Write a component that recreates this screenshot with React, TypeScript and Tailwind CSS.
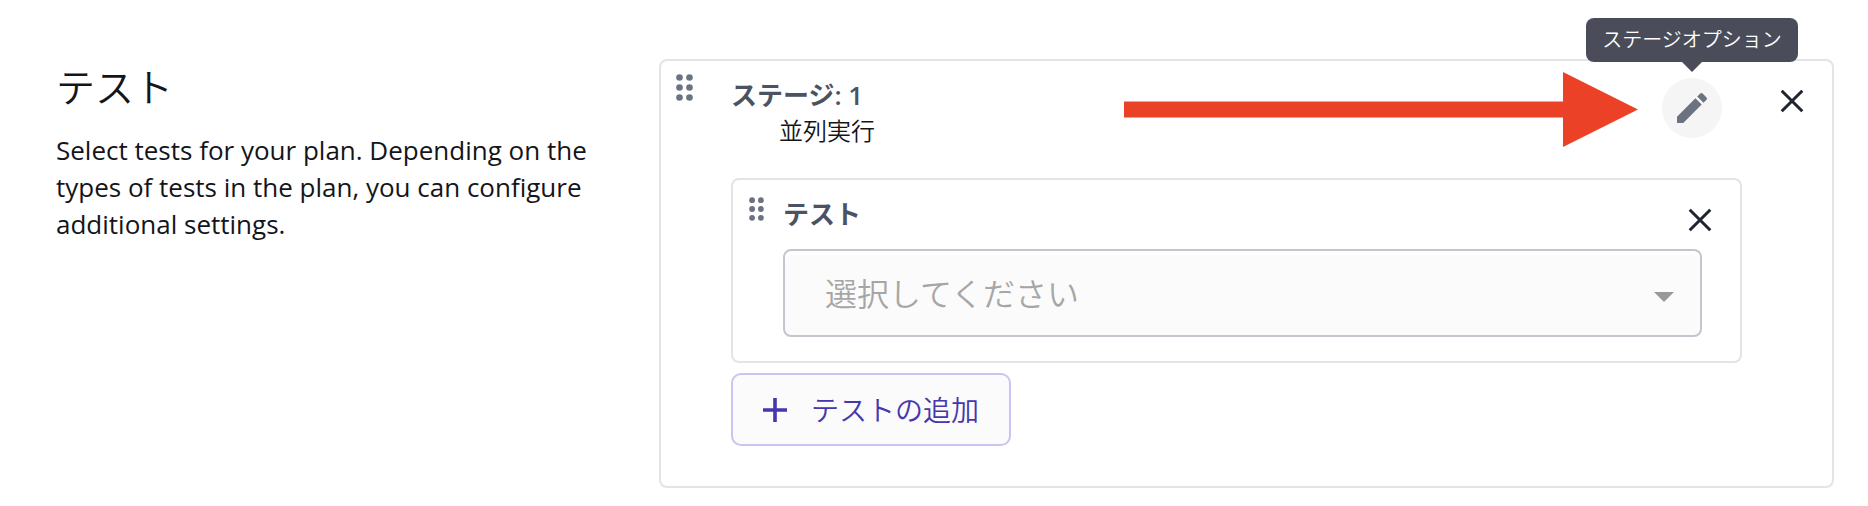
import React, { useState } from 'react';

interface IconProps {
    className?: string;
}

const DragIcon: React.FC<IconProps> = ({ className }) => (
    <svg viewBox="0 0 17 27" className={className} fill="#6b7280" aria-hidden="true">
        {[3.5, 13.5, 23.5].map(y => (
            <g key={y}>
                <circle cx="3.5" cy={y} r="3.3" />
                <circle cx="13.5" cy={y} r="3.3" />
            </g>
        ))}
    </svg>
);

const CloseIcon: React.FC<IconProps> = ({ className }) => (
    <svg viewBox="0 0 24 24" className={className} stroke="#1f242e" strokeWidth="3" fill="none" aria-hidden="true">
        <path d="M1.7 1.7L22.3 22.3M22.3 1.7L1.7 22.3" />
    </svg>
);

const PencilIcon: React.FC<IconProps> = ({ className }) => (
    <svg viewBox="0 0 24 24" className={className} fill="#6b7280" aria-hidden="true">
        <path d="M3 17.25V21h3.75L17.81 9.94l-3.75-3.75L3 17.25zM20.71 7.04a1 1 0 0 0 0-1.41l-2.34-2.34a1 1 0 0 0-1.41 0l-1.83 1.83 3.75 3.75 1.83-1.83z" />
    </svg>
);

const PlusIcon: React.FC<IconProps> = ({ className }) => (
    <svg viewBox="0 0 24 24" className={className} stroke="#4637ad" strokeWidth="3.6" aria-hidden="true">
        <path d="M0 12H24M12 0V24" />
    </svg>
);

const TestCard: React.FC = () => {
    const [teste, setTeste] = useState('');

    return (
        <div className="rounded-lg border-2 border-[#e3e3e8] pb-6">
            <div className="flex h-[69px] items-start">
                <div className="w-[50px] shrink-0 pt-[17px] pl-4">
                    <DragIcon className="h-6 w-[15px]" />
                </div>
                <label htmlFor="test-select" className="flex-1 pt-[15px] text-[26px] leading-[38px] font-bold text-[#4b5263]">テスト</label>
                <button type="button" aria-label="テストを削除" className="mt-[17px] mr-4 flex h-[46px] w-12 items-center justify-center">
                    <CloseIcon className="h-6 w-6" />
                </button>
            </div>
            <div className="relative mr-[38px] ml-[50px]">
                <select
                    id="test-select"
                    value={teste}
                    onChange={(e) => setTeste(e.target.value)}
                    className="block h-[88px] w-full appearance-none rounded-lg border-2 border-[#c5c5cd] bg-[#fbfbfb] pt-[2px] pr-20 pl-10 text-[32px] font-[350] text-[#a6a6a6] shadow-[inset_0_4px_0_#ffffff] outline-none"
                >
                    <option value="">選択してください</option>
                </select>
                <svg viewBox="0 0 20 10" className="pointer-events-none absolute top-[43px] right-7 h-[10px] w-5" fill="#999999" aria-hidden="true">
                    <path d="M0 0H20L10 10Z" />
                </svg>
            </div>
        </div>
    );
};

const StageCard: React.FC = () => (
    <section className="relative min-w-0 flex-1 rounded-lg border-2 border-[#e3e3e8] pb-10">
        <header className="flex h-[117px] items-start">
            <div className="w-[70px] shrink-0 pt-[13px] pl-[15px]">
                <DragIcon className="h-[27px] w-[17px]" />
            </div>
            <div className="flex-1">
                <h3 className="pt-[15px] text-[26px] leading-[38px] font-bold text-[#4b5263]">
                    ステージ<span className="font-semibold">: 1</span>
                </h3>
                <p className="pl-12 text-2xl leading-[34px] font-[350]">並列実行</p>
            </div>
            <div className="relative mt-[17px] mr-[46px]">
                <button type="button" aria-describedby="stage-tooltip" aria-label="編集" className="flex h-[60px] w-[60px] items-center justify-center rounded-full bg-[#f5f5f5]">
                    <PencilIcon className="h-10 w-10" />
                </button>
                <div id="stage-tooltip" role="tooltip" className="absolute bottom-full left-1/2 mb-4 flex h-11 w-[212px] -translate-x-1/2 items-center justify-center rounded-lg bg-[#4a4d59] text-xl whitespace-nowrap text-white">
                    <span className="font-[350]">ステージオプション</span>
                    <svg viewBox="0 0 20 10" className="absolute top-full left-24 h-[10px] w-5" fill="#4a4d59" aria-hidden="true">
                        <path d="M0 0H20L10 10Z" />
                    </svg>
                </div>
            </div>
            <button type="button" aria-label="ステージを削除" className="mt-[17px] mr-4 flex h-[46px] w-12 items-center justify-center">
                <CloseIcon className="h-6 w-6" />
            </button>
        </header>

        {/* Seta a apontar para o botão de opções */}
        <svg viewBox="0 0 514 75" className="pointer-events-none absolute top-[11px] right-[194px] h-[75px] w-[514px]" fill="#ea4127" aria-hidden="true">
            <path d="M0 29.5H439V0L514 37.5L439 75V45.5H0Z" />
        </svg>

        <div className="mr-[90px] ml-[70px]">
            <TestCard />
            <button type="button" className="mt-[10px] flex h-[73px] items-center gap-6 rounded-[10px] border-2 border-[#c9c5ee] bg-[#fbfbfc] px-[30px] text-[28px] font-[350] text-[#4637ad]">
                <PlusIcon className="h-6 w-6" />
                <span>テストの追加</span>
            </button>
        </div>
    </section>
);

const App: React.FC = () => (
    <main lang="ja" className="flex items-start gap-14 bg-white pt-[59px] pr-[34px] pb-[18px] pl-14 font-['Open_Sans','Noto_Sans_CJK_JP',sans-serif] text-[#141519]">
        <div className="w-[547px] shrink-0">
            <h2 className="text-[39px] leading-[56px] font-[350]">テスト</h2>
            <p className="mt-[17px] text-[26px] leading-[37px]">
                Select tests for your plan. Depending on the types of tests in the plan, you can configure additional settings.
            </p>
        </div>
        <StageCard />
    </main>
);

export default App;
